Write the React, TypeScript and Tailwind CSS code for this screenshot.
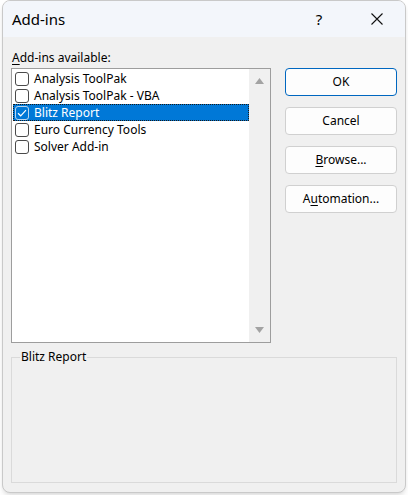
import React from "react";

const addins = [
  { name: "Analysis ToolPak", checked: false },
  { name: "Analysis ToolPak - VBA", checked: false },
  { name: "Blitz Report", checked: true },
  { name: "Euro Currency Tools", checked: false },
  { name: "Solver Add-in", checked: false },
];

const font = { fontFamily: '"Noto Sans", "Open Sans", sans-serif' };

export default function App() {
  return (
    <div className="w-[408px] h-[495px] bg-white pl-[2px] overflow-hidden" style={font}>
      <div className="w-[404px] h-[493px] rounded-[8px] border border-[#c9c9c9] bg-[#f0f0f0] overflow-hidden flex flex-col shadow-md">
        {/* title bar */}
        <div className="h-[36px] shrink-0 bg-[#f3f6fb] flex items-center pl-[9px] text-[15px] text-black">
          <span className="flex-1 leading-none">Add-ins</span>
          <span className="w-[20px] text-center leading-none mr-[42px]">?</span>
          <svg width="12" height="12" viewBox="0 0 12 12" className="mr-[22px]">
            <path d="M0.5 0.5 L11.5 11.5 M11.5 0.5 L0.5 11.5" stroke="#111" strokeWidth="1.1" fill="none" />
          </svg>
        </div>

        {/* body */}
        <div className="flex-1 px-[8px] pt-[13px] text-[12px] text-black">
          <div className="h-[16px] leading-[16px] pl-[1px]">
            <span className="underline underline-offset-2">A</span>dd-ins available:
          </div>

          <div className="flex mt-[2px]">
            <div className="w-[260px] h-[275px] border border-[#9d9d9d] bg-white flex">
              <div className="flex-1 pt-[1px] pl-[1px]">
                {addins.map((a) => (
                  <AddinRow key={a.name} name={a.name} checked={a.checked} />
                ))}
              </div>
              <div className="w-[22px] bg-[#f0f0f0] flex flex-col items-center justify-between py-[9px]">
                <svg width="9" height="6" viewBox="0 0 9 6">
                  <path d="M4.5 0 L9 6 L0 6 Z" fill="#a3a3a3" />
                </svg>
                <svg width="9" height="6" viewBox="0 0 9 6">
                  <path d="M0 0 L9 0 L4.5 6 Z" fill="#a3a3a3" />
                </svg>
              </div>
            </div>

            <div className="ml-[14px] flex flex-col gap-[11px]">
              <DialogButton primary>OK</DialogButton>
              <DialogButton>Cancel</DialogButton>
              <DialogButton>
                <span className="underline underline-offset-2">B</span>rowse...
              </DialogButton>
              <DialogButton>
                A<span className="underline underline-offset-2">u</span>tomation...
              </DialogButton>
            </div>
          </div>

          <fieldset className="mt-[6px] w-[386px] h-[134px] border border-[#dadada] px-[8px]">
            <legend className="px-[1px] leading-[16px]">Blitz Report</legend>
          </fieldset>
        </div>
      </div>
    </div>
  );
}

function AddinRow({ name, checked }: { name: string; checked: boolean }) {
  return (
    <div
      className={`h-[17px] w-[236px] flex items-center pl-[2px] ${
        checked ? "bg-[#0078d7] text-white outline outline-1 outline-dotted outline-[#1a1a1a] -outline-offset-1" : ""
      }`}
    >
      <div
        className={`w-[14px] h-[14px] rounded-[3px] border flex items-center justify-center ${
          checked ? "border-[#bcd6ee]" : "border-[#4a4a4a] bg-white"
        }`}
      >
        {checked && (
          <svg width="10" height="8" viewBox="0 0 10 8">
            <path d="M1 4.2 L3.7 6.8 L9 1.2" stroke="#fff" strokeWidth="1.2" fill="none" />
          </svg>
        )}
      </div>
      <span className="ml-[5px] leading-[17px]">{name}</span>
    </div>
  );
}

function DialogButton({ children, primary = false }: { children: React.ReactNode; primary?: boolean }) {
  return (
    <button
      className={`w-[112px] h-[28px] rounded-[4px] bg-[#fdfdfd] border text-[12px] text-black ${
        primary ? "border-[#0067c0]" : "border-[#d0d0d0]"
      }`}
    >
      {children}
    </button>
  );
}
